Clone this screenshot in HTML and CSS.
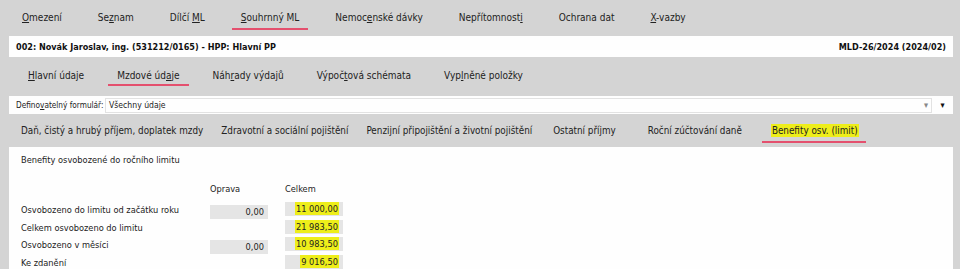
FILE: index.html
```html
<!DOCTYPE html>
<html lang="cs">
<head>
<meta charset="utf-8">
<link rel="stylesheet" href="styles.css">
</head>
<body>
<nav class="menu">
  <span class="mi"><u>O</u>mezení</span>
  <span class="mi">Se<u>z</u>nam</span>
  <span class="mi">Dílčí <u>M</u>L</span>
  <span class="mi active"><u>S</u>ouhrnný ML</span>
  <span class="mi">Nemoc<u>e</u>nské dávky</span>
  <span class="mi">Nepřítomnost<u>i</u></span>
  <span class="mi">Ochrana dat</span>
  <span class="mi"><u>X</u>-vazby</span>
</nav>
<div class="header">
  <span>002: Novák Jaroslav, ing. (531212/0165) - HPP: Hlavní PP</span>
  <span>MLD-26/2024 (2024/02)</span>
</div>
<nav class="tabs2">
  <span class="t2"><u>H</u>lavní údaje</span>
  <span class="t2 active">Mzdové úd<u>a</u>je</span>
  <span class="t2">Náh<u>r</u>ady výdajů</span>
  <span class="t2">Výpoč<u>t</u>ová schémata</span>
  <span class="t2">Vyp<u>l</u>něné položky</span>
</nav>
<div class="formrow">
  <span class="flabel">Defino<u>v</u>atelný formulář:</span>
  <div class="fselect"><span>Všechny údaje</span><span class="arr1">▾</span></div>
  <span class="arr2">▾</span>
</div>
<nav class="tabs3">
  <span class="t3">Daň, čistý a hrubý příjem, doplatek mzdy</span>
  <span class="t3">Zdravotní a sociální pojištění</span>
  <span class="t3">Penzijní připojištění a životní pojištění</span>
  <span class="t3 t3-a">Ostatní příjmy</span>
  <span class="t3 t3-b">Roční zúčtování daně</span>
  <span class="t3 t3-c active"><mark>Benefity osv. (limit)</mark></span>
</nav>
<main class="panel">
  <div class="ptitle">Benefity osvobozené do ročního limitu</div>
  <div class="grid">
    <div class="heads">
      <span class="lab"></span>
      <span class="col">Oprava</span>
      <span class="col">Celkem</span>
    </div>
    <div class="row">
      <span class="lab">Osvobozeno do limitu od začátku roku</span>
      <span class="box opr">0,00</span>
      <span class="box tot"><mark>11 000,00</mark></span>
    </div>
    <div class="row">
      <span class="lab">Celkem osvobozeno do limitu</span>
      <span class="box nobox"></span>
      <span class="box tot"><mark>21 983,50</mark></span>
    </div>
    <div class="row">
      <span class="lab">Osvobozeno v měsíci</span>
      <span class="box opr">0,00</span>
      <span class="box tot"><mark>10 983,50</mark></span>
    </div>
    <div class="row">
      <span class="lab">Ke zdanění</span>
      <span class="box nobox"></span>
      <span class="box tot"><mark>9 016,50</mark></span>
    </div>
  </div>
</main>
</body>
</html>
```
FILE: styles.css
```css
html, body {
  margin: 0;
  padding: 0;
  height: 100%;
}
body {
  background: #d4d4d4;
  font-family: "DejaVu Sans Condensed", "DejaVu Sans", sans-serif;
  font-stretch: condensed;
  color: #222;
  overflow: hidden;
}
u { text-decoration: underline; text-underline-offset: 1px; }
mark {
  background: #eeee1a;
  color: #222;
  padding: 1px 1px;
}

.menu, .tabs2, .tabs3 {
  font-size: 10px;
  white-space: nowrap;
}
.menu {
  display: flex;
  height: 35px;
  align-items: center;
  padding-left: 13px;
  gap: 18px;
}
.mi {
  position: relative;
  flex: none;
  padding: 0 9px;
  line-height: 34px;
}
.active::after {
  content: "";
  position: absolute;
  left: 0;
  right: 0;
  bottom: 5px;
  height: 2px;
  background: #e4506e;
}

.header {
  display: flex;
  justify-content: space-between;
  align-items: center;
  background: #fefefe;
  margin: 1px 7px 0 9px;
  height: 21px;
  padding: 0 7px;
  font-size: 9px;
  font-weight: bold;
  color: #111;
}

.tabs2 {
  display: flex;
  height: 32px;
  align-items: flex-start;
  padding-left: 19px;
  gap: 15px;
}
.t2 {
  position: relative;
  flex: none;
  padding: 0 9px;
  line-height: 38px;
  height: 31px;
}
.t2.active::after { bottom: 2px; }

.formrow {
  display: flex;
  align-items: center;
  background: #fefefe;
  margin: 7px 7px 0 9px;
  height: 18px;
  padding-left: 7px;
  font-size: 8.6px;
}
.flabel {
  flex: none;
  width: 89px;
  white-space: nowrap;
  font-size: 8.2px;
}
.fselect {
  flex: 1;
  display: flex;
  justify-content: space-between;
  align-items: center;
  height: 15px;
  border: 1px solid #e2e2e2;
  padding: 0 3px;
  box-sizing: border-box;
}
.arr1 { color: #888; font-size: 9px; }
.arr2 { width: 21px; text-align: center; font-size: 9px; color: #111; }

.tabs3 {
  display: flex;
  height: 33px;
  align-items: center;
  padding-left: 12px;
  font-size: 9.8px;
}
.t3 {
  position: relative;
  flex: none;
  padding: 0 9px;
  line-height: 33px;
}
.t3-a { padding: 0 16px 0 12px; }
.t3-b { padding: 0 20px 0 16px; }
.t3-c { padding: 0 7px 0 9px; }
.t3.active::after { bottom: 4px; }

.panel {
  background: #fefefe;
  margin: 0 7px 0 9px;
  height: 200px;
  padding: 7px 12px;
  font-size: 9.2px;
}
.grid { margin-top: 14px; }
.heads, .row {
  display: flex;
}
.heads { height: 18px; align-items: center; margin-bottom: 5px; }
.lab { width: 189px; }
.col { width: 75px; }
.row { height: 17.5px; }
.row .lab { padding-top: 1px; line-height: 14px; }
.box {
  width: 58px;
  height: 14px;
  line-height: 14px;
  margin-right: 17px;
  text-align: right;
  padding-right: 4px;
  box-sizing: border-box;
  background: #e5e5e5;
}
.opr { margin-top: 3px; }
.tot { margin-top: 0; }
.nobox { background: transparent; }
```
